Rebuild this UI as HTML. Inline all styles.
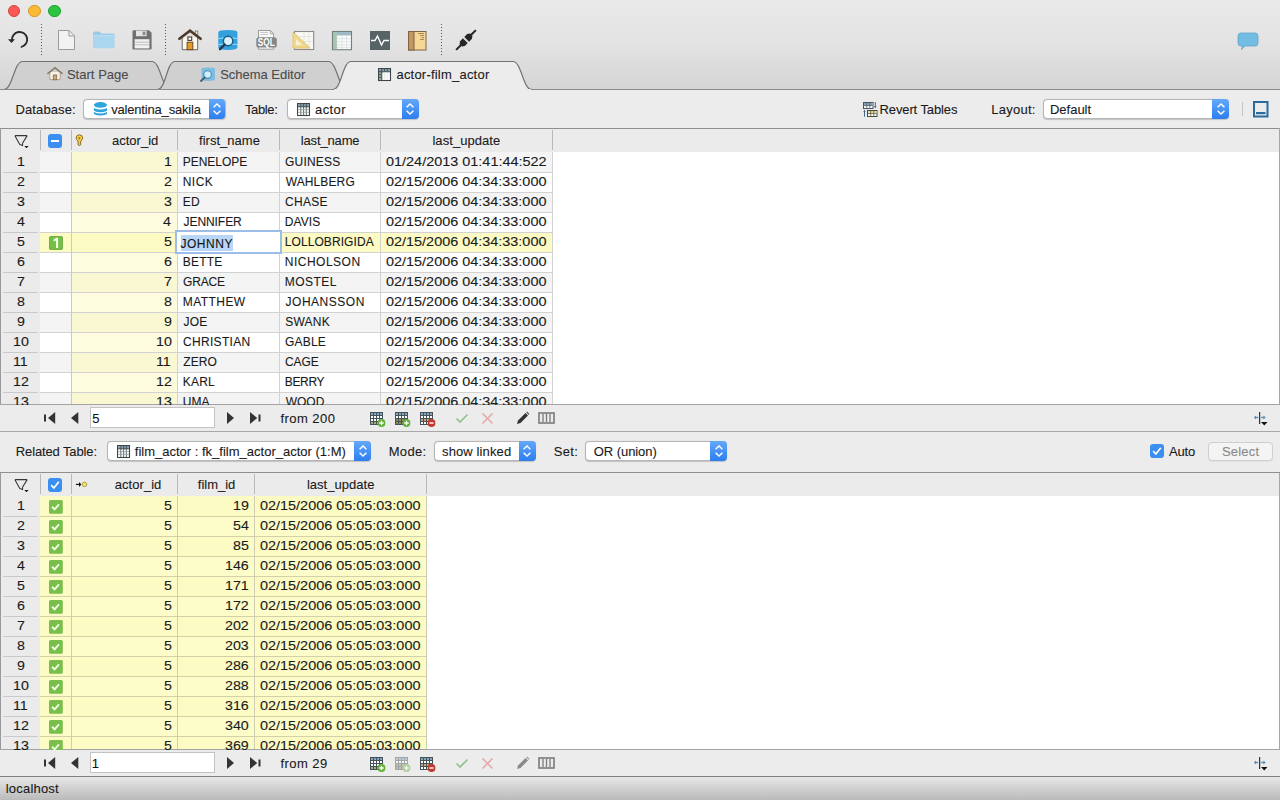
<!DOCTYPE html><html><head><meta charset="utf-8"><style>
html,body{margin:0;padding:0;width:1280px;height:800px;overflow:hidden;background:#ececec}
body{position:relative;font-family:"Liberation Sans",sans-serif}
div,span,svg{position:absolute}
span{white-space:pre;line-height:16px;-webkit-text-stroke:0.1px currentColor}
</style></head><body>
<div style="left:0px;top:0px;width:1280px;height:89px;background:linear-gradient(#e9e9e9 0px,#e4e4e4 40px,#d5d5d5 89px)"></div>
<div style="left:7.9px;top:4.5px;width:10.6px;height:10.6px;border-radius:50%;background:#f95a55;border:0.7px solid #d8413b"></div>
<div style="left:28.1px;top:4.5px;width:10.6px;height:10.6px;border-radius:50%;background:#fbb935;border:0.7px solid #d99a26"></div>
<div style="left:48px;top:4.5px;width:10.6px;height:10.6px;border-radius:50%;background:#2cc440;border:0.7px solid #1ea22f"></div>
<div style="left:41px;top:24px;width:1px;height:32px;background:repeating-linear-gradient(#555 0 1px,transparent 1px 3px)"></div>
<div style="left:165px;top:24px;width:1px;height:32px;background:repeating-linear-gradient(#555 0 1px,transparent 1px 3px)"></div>
<div style="left:441px;top:24px;width:1px;height:32px;background:repeating-linear-gradient(#555 0 1px,transparent 1px 3px)"></div>
<svg style="left:6px;top:28px" width="24" height="24" viewBox="0 0 24 24"><path d="M6 12.2 A7.6 7.6 0 1 1 15.6 18.9" fill="none" stroke="#2b2b2b" stroke-width="1.9" stroke-linecap="round"/><path d="M2 11.2 L9 11.2 L5.5 15 Z" fill="#2b2b2b"/></svg>
<svg style="left:57px;top:29px" width="20" height="22" viewBox="0 0 20 22"><path d="M1.5 1.5 H12 L17.5 7 V20.5 H1.5 Z" fill="#f2f2f2" stroke="#9a9a9a"/><path d="M12 1.5 V7 H17.5" fill="none" stroke="#9a9a9a"/></svg>
<svg style="left:91px;top:29px" width="26" height="22" viewBox="0 0 26 22"><path d="M2 4.6 Q2 2.6 4 2.6 H8.5 L10.3 4.4 H21.6 Q23.6 4.4 23.6 6.4 V8 H2 Z" fill="#9ccbea"/><rect x="2" y="6" width="21.6" height="13.3" rx="1.6" fill="#abd6f0"/><path d="M3 6.8 H22.6" stroke="#c4e4f7" stroke-width="0.8"/></svg>
<svg style="left:131px;top:29px" width="23" height="22" viewBox="0 0 23 22"><path d="M1.5 2.5 Q1.5 1.2 2.8 1.2 H18 L20.6 3.8 V19.2 Q20.6 20.5 19.3 20.5 H2.8 Q1.5 20.5 1.5 19.2 Z" fill="#707070"/><rect x="5" y="1.6" width="10.6" height="5.6" fill="#e4e4e4"/><rect x="11.6" y="2.6" width="2.8" height="3.6" fill="#8a8a8a"/><rect x="3.6" y="10.2" width="14.8" height="9.2" fill="#f2f2f2"/><path d="M4 13.2H18M4 15.8H18" stroke="#b0b0b0" stroke-width="0.8"/></svg>
<svg style="left:178px;top:28px" width="24" height="24" viewBox="0 0 24 24"><rect x="17.2" y="3" width="2.6" height="4" fill="#f4f0e6" stroke="#7a6a5a" stroke-width="0.8"/><path d="M4.2 9.5 V21.7 H19.7 V9.5" fill="#fbf8f0" stroke="#6e665c" stroke-width="1"/><path d="M1.4 10.8 L12 2.6 L22.6 10.8" fill="none" stroke="#4d3b2a" stroke-width="2.6" stroke-linecap="round"/><rect x="9.9" y="9" width="3.8" height="3.4" fill="#fff" stroke="#4d3b2a" stroke-width="1.1"/><rect x="9.1" y="14.2" width="5.7" height="7.5" fill="#e69a2a" stroke="#6a4a20" stroke-width="1"/></svg>
<svg style="left:217px;top:28px" width="23" height="24" viewBox="0 0 23 24"><path d="M1.3 4.5 Q1.3 2.1 10.85 2.1 Q20.4 2.1 20.4 4.5 V19.6 Q20.4 22 10.85 22 Q1.3 22 1.3 19.6 Z" fill="#33a2dc"/><path d="M1.3 10.8 Q5 9.2 8 10.6 M14 10.6 Q17 9.2 20.4 10.8 M1.3 16.8 Q4 15.6 6.5 16.6 M15.5 16.6 Q18 15.6 20.4 16.8" stroke="#9fdcf6" stroke-width="1" fill="none"/><circle cx="11.1" cy="13" r="4.7" fill="#d9f2fc" stroke="#1d5a80" stroke-width="1.4"/><path d="M7.6 16.6 L3 21.2" stroke="#1d3a50" stroke-width="2.4" stroke-linecap="round"/></svg>
<svg style="left:254px;top:28px" width="24" height="24" viewBox="0 0 24 24"><path d="M4.5 2.5 H16.3 L19.6 5.8 V21.2 H4.5 Z" fill="#f7f7f7" stroke="#9b9b9b" stroke-width="1"/><path d="M16.3 2.5 V5.8 H19.6" fill="none" stroke="#9b9b9b" stroke-width="0.8"/><path d="M6.5 4.5 H14 M6.5 6.5 H14" stroke="#c9c9c9" stroke-width="1"/><rect x="2.3" y="9.2" width="20.5" height="10.4" rx="2.6" fill="#868686"/><text x="3.8" y="18.3" font-family="Liberation Sans" font-size="10.8" font-weight="bold" fill="#fff" textLength="17" lengthAdjust="spacingAndGlyphs">SQL</text></svg>
<svg style="left:291px;top:30px" width="24" height="21" viewBox="0 0 24 21"><rect x="3.5" y="1.5" width="19.2" height="18" fill="#f8f8f4" stroke="#8a8a8a" stroke-width="1.1"/><path d="M8 6.5H22M8 11.5H22M13 2V19M18 2V19" stroke="#e2e2da" stroke-width="0.8"/><path d="M2 2 L2 18 L19 18 Z" fill="#f0d88e" stroke="#e3c470" stroke-width="1"/><path d="M5 9 L5 15 L11 15 Z" fill="#f8f1d8"/></svg>
<svg style="left:331px;top:30px" width="23" height="21" viewBox="0 0 23 21"><rect x="1.5" y="1.5" width="19" height="18.2" fill="#fbfbfb" stroke="#737f7f" stroke-width="1.1"/><rect x="2" y="2" width="18" height="3.4" fill="#9dbac8"/><rect x="2" y="2" width="3.8" height="17.2" fill="#a7c6ae"/><path d="M6 5.5V19M11 2V19M15.6 2V19M2 8.6H20M2 11.7H20M2 14.8H20M2 17.3H20" stroke="#a9b9b9" stroke-width="0.5" opacity="0.6"/></svg>
<svg style="left:369px;top:30px" width="22" height="21" viewBox="0 0 22 21"><rect x="1" y="1" width="20" height="19" fill="#586366"/><path d="M2 10.5 H6 L8.5 6 L12.5 15 L15 10.5 H20" fill="none" stroke="#fff" stroke-width="1.4" stroke-linejoin="miter"/></svg>
<svg style="left:407px;top:30px" width="21" height="21" viewBox="0 0 21 21"><rect x="1.5" y="1.5" width="17.5" height="18.5" fill="#f7d796" stroke="#7d6442" stroke-width="1"/><rect x="1.5" y="1.5" width="5.5" height="18.5" fill="#c4955e" stroke="#7d6442" stroke-width="1"/><path d="M11 3.5H17M13 5.5H17M14.5 7.5H17M13 9.5H17" stroke="#6a5030" stroke-width="0.6"/></svg>
<svg style="left:453px;top:27px" width="26" height="26" viewBox="0 0 26 26"><g transform="rotate(-45 13 13)"><path d="M-1 13 H6 M20 13 H27" stroke="#262626" stroke-width="2"/><path d="M5.5 11.4 L8 9.6 H12 V16.4 H8 L5.5 14.6 Z" fill="#262626"/><path d="M20.5 11.4 L18 9.6 H14 V16.4 H18 L20.5 14.6 Z" fill="#262626"/></g></svg>
<svg style="left:1236px;top:31px" width="24" height="20" viewBox="0 0 24 20"><path d="M5 2 H19 Q22 2 22 5 V12 Q22 15 19 15 H9 L5.5 18.5 L6.5 15 H5 Q2 15 2 12 V5 Q2 2 5 2 Z" fill="#73bde3" stroke="#5fa4ca" stroke-width="0.8"/></svg>
<svg style="left:0;top:55px" width="1280" height="35" viewBox="0 55 1280 35"><path d="M4 89.5 C12.5 89.5 14.0 61.5 22.5 61.5 L152 61.5 C160.5 61.5 162.0 89.5 170.5 89.5 Z" fill="#d0d0d0" stroke="#727272" stroke-width="1.15"/><path d="M157.5 89.5 C166.0 89.5 166.5 61.5 175 61.5 L328.5 61.5 C337.0 61.5 338.5 89.5 347 89.5 Z" fill="#d0d0d0" stroke="#727272" stroke-width="1.15"/><rect x="0" y="89" width="1280" height="1" fill="#8a8a8a"/><path d="M333 89.5 C341.5 89.5 342.5 61.5 351 61.5 L513 61.5 C521.5 61.5 523.0 89.5 531.5 89.5 Z" fill="#ececec" stroke="#727272" stroke-width="1.15"/><rect x="334" y="89" width="197" height="2" fill="#ececec"/></svg>
<svg style="left:46px;top:66px" width="18" height="16" viewBox="0 0 18 16"><path d="M3.8 6 V13.6 H14.2 V6" fill="#f7f0e6" stroke="#a89c8c" stroke-width="0.9"/><path d="M2 7.4 L9 1.8 L16 7.4" fill="none" stroke="#8a7d6c" stroke-width="1.7" stroke-linecap="round"/><rect x="7.3" y="9" width="3.4" height="4.8" fill="#c9a97a" stroke="#8a6a40" stroke-width="0.8"/></svg>
<span style="left:66.91px;top:67px;font-size:13px;letter-spacing:0.027px;color:#4a4a4a;">Start Page</span>
<svg style="left:199px;top:66px" width="18" height="16" viewBox="0 0 18 16"><path d="M2.5 2.8 Q2.5 1.4 9.2 1.4 Q16 1.4 16 2.8 V13.6 Q16 15 9.2 15 Q2.5 15 2.5 13.6 Z" fill="#7cbde0"/><circle cx="8.6" cy="8.6" r="3.8" fill="#cdeefb" stroke="#4a8db3" stroke-width="1.1"/><path d="M5.8 11.4 L2 15" stroke="#4a5a66" stroke-width="1.8" stroke-linecap="round"/></svg>
<span style="left:220.21px;top:67px;font-size:13px;letter-spacing:-0.021px;color:#4a4a4a;">Schema Editor</span>
<svg style="left:378px;top:68px" width="14" height="14" viewBox="0 0 14 14"><rect x="0.5" y="0.5" width="12" height="12" fill="#fff" stroke="#3c474b" stroke-width="1.1"/><rect x="1" y="1" width="2.6" height="11" fill="#8fae9e"/><rect x="1" y="1" width="11" height="2.6" fill="#86a0ab"/><path d="M1 3.8H12" stroke="#3c474b" stroke-width="1"/><path d="M3.8 1V12" stroke="#3c474b" stroke-width="1"/><path d="M6.6 1V3.6M9.3 1V3.6M1 6.6H3.6M1 9.3H3.6" stroke="#3c474b" stroke-width="0.8"/><path d="M6.6 4V12M9.3 4V12M4 6.6H12M4 9.3H12" stroke="#dfe6e6" stroke-width="0.6"/></svg>
<span style="left:396.45px;top:67px;font-size:13px;letter-spacing:0.213px;color:#1a1a1a;">actor-film_actor</span>
<div style="left:0px;top:90px;width:1280px;height:38px;background:#ececec"></div>
<div style="left:0px;top:128px;width:1280px;height:1px;background:#8f8f8f"></div>
<span style="left:15.43px;top:102px;font-size:13px;letter-spacing:0.124px;color:#1a1a1a;">Database:</span>
<div style="left:82.5px;top:99.2px;width:143.0px;height:20.299999999999997px;box-sizing:border-box;border-radius:4px;background:#fff;border:0.5px solid #b5b5b5;box-shadow:0 0.5px 1px rgba(0,0,0,0.18)"></div>
<div style="left:208.8px;top:99.2px;width:16.69999999999999px;height:20.299999999999997px;border-radius:0 4px 4px 0;background:linear-gradient(#64a8f8,#2c7ef0)"></div>
<svg style="left:212.15px;top:102.35px" width="10" height="14" viewBox="0 0 10 14"><path d="M1.6 5.2 L5 2 L8.4 5.2 M1.6 8.8 L5 12 L8.4 8.8" fill="none" stroke="#fff" stroke-width="1.5"/></svg>
<svg style="left:92px;top:101px" width="17" height="16" viewBox="0 0 17 16"><g fill="#2ea4dc"><ellipse cx="8.45" cy="3.9" rx="6.55" ry="2.8"/><path d="M1.9 6.9 Q8.45 9.9 15 6.9 V9.7 Q8.45 12.7 1.9 9.7 Z"/><path d="M1.9 10.9 Q8.45 13.9 15 10.9 V13 Q8.45 16.2 1.9 13 Z"/></g></svg>
<span style="left:111.16px;top:102px;font-size:13px;letter-spacing:-0.177px;color:#1a1a1a;">valentina_sakila</span>
<span style="left:245.01px;top:102px;font-size:13px;letter-spacing:-0.390px;color:#1a1a1a;">Table:</span>
<div style="left:286.5px;top:99.2px;width:132.25px;height:20.299999999999997px;box-sizing:border-box;border-radius:4px;background:#fff;border:0.5px solid #b5b5b5;box-shadow:0 0.5px 1px rgba(0,0,0,0.18)"></div>
<div style="left:401.9px;top:99.2px;width:16.850000000000023px;height:20.299999999999997px;border-radius:0 4px 4px 0;background:linear-gradient(#64a8f8,#2c7ef0)"></div>
<svg style="left:405.325px;top:102.35px" width="10" height="14" viewBox="0 0 10 14"><path d="M1.6 5.2 L5 2 L8.4 5.2 M1.6 8.8 L5 12 L8.4 8.8" fill="none" stroke="#fff" stroke-width="1.5"/></svg>
<svg style="left:296.8px;top:102.8px" width="14" height="14" viewBox="0 0 14 14"><rect x="0.5" y="0.5" width="12" height="12" fill="#fff" stroke="#3c474b" stroke-width="1.1"/><rect x="1" y="1" width="11" height="2.6" fill="#86a0ab"/><path d="M1 3.8H12" stroke="#3c474b" stroke-width="1"/><path d="M3.8 1V12M6.6 1V12M9.3 1V12" stroke="#3c474b" stroke-width="0.8"/><path d="M1 6.6H12M1 9.3H12" stroke="#8d9598" stroke-width="0.7"/></svg>
<span style="left:315.05px;top:102px;font-size:13px;letter-spacing:0.392px;color:#1a1a1a;">actor</span>
<svg style="left:861px;top:100px" width="18" height="19" viewBox="0 0 18 19"><rect x="2.5" y="2.5" width="9.5" height="6" fill="#fff" stroke="#4a5560"/><rect x="3" y="3" width="8.5" height="2.6" fill="#8aa5b5"/><path d="M5.7 3V8M8.8 3V8M3 5.6H11.5" stroke="#4a5560" stroke-width="0.7"/><path d="M14.3 2V7.5" stroke="#3f6a8a" stroke-width="1"/><path d="M13 6.2 L14.3 8.2 L15.6 6.2Z" fill="#3f6a8a"/><rect x="6.5" y="10.5" width="9.5" height="6" fill="#fff" stroke="#4b4b35"/><rect x="7" y="11" width="8.5" height="2.6" fill="#e3dba0"/><path d="M9.7 11V16M12.8 11V16M7 13.6H15.5" stroke="#4b4b35" stroke-width="0.7"/><path d="M3.5 11V16.7" stroke="#3f6a8a" stroke-width="1"/><path d="M2.2 11.8 L3.5 9.8 L4.8 11.8Z" fill="#3f6a8a"/></svg>
<span style="left:879.53px;top:102px;font-size:13px;letter-spacing:-0.115px;color:#1a1a1a;">Revert Tables</span>
<span style="left:991.23px;top:102px;font-size:13px;letter-spacing:0.252px;color:#1a1a1a;">Layout:</span>
<div style="left:1042.8px;top:99.2px;width:186.20000000000005px;height:20.299999999999997px;box-sizing:border-box;border-radius:4px;background:#fff;border:0.5px solid #b5b5b5;box-shadow:0 0.5px 1px rgba(0,0,0,0.18)"></div>
<div style="left:1212px;top:99.2px;width:17px;height:20.299999999999997px;border-radius:0 4px 4px 0;background:linear-gradient(#64a8f8,#2c7ef0)"></div>
<svg style="left:1215.5px;top:102.35px" width="10" height="14" viewBox="0 0 10 14"><path d="M1.6 5.2 L5 2 L8.4 5.2 M1.6 8.8 L5 12 L8.4 8.8" fill="none" stroke="#fff" stroke-width="1.5"/></svg>
<span style="left:1049.93px;top:102px;font-size:13px;letter-spacing:0.000px;color:#1a1a1a;">Default</span>
<div style="left:1242px;top:102px;width:1px;height:14px;background:#c4c4c4"></div>
<svg style="left:1252px;top:100px" width="17" height="18" viewBox="0 0 17 18"><rect x="2" y="2" width="13.5" height="14.5" fill="none" stroke="#2a6a9c" stroke-width="2"/><rect x="4" y="12" width="9.5" height="2.2" fill="#2a6a9c"/></svg>
<div style="left:0px;top:129px;width:1280px;height:275px;background:#fff"></div>
<div style="left:0px;top:129px;width:1280px;height:23px;background:#ebebeb"></div>
<div style="left:0px;top:152px;width:40px;height:20px;background:#ebebeb"></div>
<div style="left:40px;top:152px;width:31px;height:20px;background:#f4f4f4"></div>
<div style="left:71px;top:152px;width:106px;height:20px;background:#f9f8d3"></div>
<div style="left:177px;top:152px;width:102px;height:20px;background:#f4f4f4"></div>
<div style="left:279px;top:152px;width:101px;height:20px;background:#f4f4f4"></div>
<div style="left:380px;top:152px;width:172px;height:20px;background:#f4f4f4"></div>
<div style="left:0px;top:172px;width:40px;height:20px;background:#ebebeb"></div>
<div style="left:40px;top:172px;width:31px;height:20px;background:#ffffff"></div>
<div style="left:71px;top:172px;width:106px;height:20px;background:#fdfcde"></div>
<div style="left:177px;top:172px;width:102px;height:20px;background:#ffffff"></div>
<div style="left:279px;top:172px;width:101px;height:20px;background:#ffffff"></div>
<div style="left:380px;top:172px;width:172px;height:20px;background:#ffffff"></div>
<div style="left:0px;top:192px;width:40px;height:20px;background:#ebebeb"></div>
<div style="left:40px;top:192px;width:31px;height:20px;background:#f4f4f4"></div>
<div style="left:71px;top:192px;width:106px;height:20px;background:#f9f8d3"></div>
<div style="left:177px;top:192px;width:102px;height:20px;background:#f4f4f4"></div>
<div style="left:279px;top:192px;width:101px;height:20px;background:#f4f4f4"></div>
<div style="left:380px;top:192px;width:172px;height:20px;background:#f4f4f4"></div>
<div style="left:0px;top:212px;width:40px;height:20px;background:#ebebeb"></div>
<div style="left:40px;top:212px;width:31px;height:20px;background:#ffffff"></div>
<div style="left:71px;top:212px;width:106px;height:20px;background:#fdfcde"></div>
<div style="left:177px;top:212px;width:102px;height:20px;background:#ffffff"></div>
<div style="left:279px;top:212px;width:101px;height:20px;background:#ffffff"></div>
<div style="left:380px;top:212px;width:172px;height:20px;background:#ffffff"></div>
<div style="left:0px;top:232px;width:40px;height:20px;background:#ebebeb"></div>
<div style="left:40px;top:232px;width:31px;height:20px;background:#fcfbc3"></div>
<div style="left:71px;top:232px;width:106px;height:20px;background:#fcfbc3"></div>
<div style="left:177px;top:232px;width:102px;height:20px;background:#fcfbc3"></div>
<div style="left:279px;top:232px;width:101px;height:20px;background:#fcfbc3"></div>
<div style="left:380px;top:232px;width:172px;height:20px;background:#fcfbc3"></div>
<div style="left:0px;top:252px;width:40px;height:20px;background:#ebebeb"></div>
<div style="left:40px;top:252px;width:31px;height:20px;background:#ffffff"></div>
<div style="left:71px;top:252px;width:106px;height:20px;background:#fdfcde"></div>
<div style="left:177px;top:252px;width:102px;height:20px;background:#ffffff"></div>
<div style="left:279px;top:252px;width:101px;height:20px;background:#ffffff"></div>
<div style="left:380px;top:252px;width:172px;height:20px;background:#ffffff"></div>
<div style="left:0px;top:272px;width:40px;height:20px;background:#ebebeb"></div>
<div style="left:40px;top:272px;width:31px;height:20px;background:#f4f4f4"></div>
<div style="left:71px;top:272px;width:106px;height:20px;background:#f9f8d3"></div>
<div style="left:177px;top:272px;width:102px;height:20px;background:#f4f4f4"></div>
<div style="left:279px;top:272px;width:101px;height:20px;background:#f4f4f4"></div>
<div style="left:380px;top:272px;width:172px;height:20px;background:#f4f4f4"></div>
<div style="left:0px;top:292px;width:40px;height:20px;background:#ebebeb"></div>
<div style="left:40px;top:292px;width:31px;height:20px;background:#ffffff"></div>
<div style="left:71px;top:292px;width:106px;height:20px;background:#fdfcde"></div>
<div style="left:177px;top:292px;width:102px;height:20px;background:#ffffff"></div>
<div style="left:279px;top:292px;width:101px;height:20px;background:#ffffff"></div>
<div style="left:380px;top:292px;width:172px;height:20px;background:#ffffff"></div>
<div style="left:0px;top:312px;width:40px;height:20px;background:#ebebeb"></div>
<div style="left:40px;top:312px;width:31px;height:20px;background:#f4f4f4"></div>
<div style="left:71px;top:312px;width:106px;height:20px;background:#f9f8d3"></div>
<div style="left:177px;top:312px;width:102px;height:20px;background:#f4f4f4"></div>
<div style="left:279px;top:312px;width:101px;height:20px;background:#f4f4f4"></div>
<div style="left:380px;top:312px;width:172px;height:20px;background:#f4f4f4"></div>
<div style="left:0px;top:332px;width:40px;height:20px;background:#ebebeb"></div>
<div style="left:40px;top:332px;width:31px;height:20px;background:#ffffff"></div>
<div style="left:71px;top:332px;width:106px;height:20px;background:#fdfcde"></div>
<div style="left:177px;top:332px;width:102px;height:20px;background:#ffffff"></div>
<div style="left:279px;top:332px;width:101px;height:20px;background:#ffffff"></div>
<div style="left:380px;top:332px;width:172px;height:20px;background:#ffffff"></div>
<div style="left:0px;top:352px;width:40px;height:20px;background:#ebebeb"></div>
<div style="left:40px;top:352px;width:31px;height:20px;background:#f4f4f4"></div>
<div style="left:71px;top:352px;width:106px;height:20px;background:#f9f8d3"></div>
<div style="left:177px;top:352px;width:102px;height:20px;background:#f4f4f4"></div>
<div style="left:279px;top:352px;width:101px;height:20px;background:#f4f4f4"></div>
<div style="left:380px;top:352px;width:172px;height:20px;background:#f4f4f4"></div>
<div style="left:0px;top:372px;width:40px;height:20px;background:#ebebeb"></div>
<div style="left:40px;top:372px;width:31px;height:20px;background:#ffffff"></div>
<div style="left:71px;top:372px;width:106px;height:20px;background:#fdfcde"></div>
<div style="left:177px;top:372px;width:102px;height:20px;background:#ffffff"></div>
<div style="left:279px;top:372px;width:101px;height:20px;background:#ffffff"></div>
<div style="left:380px;top:372px;width:172px;height:20px;background:#ffffff"></div>
<div style="left:0px;top:392px;width:40px;height:12px;background:#ebebeb"></div>
<div style="left:40px;top:392px;width:31px;height:12px;background:#f4f4f4"></div>
<div style="left:71px;top:392px;width:106px;height:12px;background:#f9f8d3"></div>
<div style="left:177px;top:392px;width:102px;height:12px;background:#f4f4f4"></div>
<div style="left:279px;top:392px;width:101px;height:12px;background:#f4f4f4"></div>
<div style="left:380px;top:392px;width:172px;height:12px;background:#f4f4f4"></div>
<div style="left:3px;top:172px;width:35px;height:1px;background:#c9c9c9"></div>
<div style="left:40px;top:172px;width:31px;height:1px;background:#d2d2d2"></div>
<div style="left:71px;top:172px;width:481px;height:1px;background:#d2d2d2"></div>
<div style="left:3px;top:192px;width:35px;height:1px;background:#c9c9c9"></div>
<div style="left:40px;top:192px;width:31px;height:1px;background:#d2d2d2"></div>
<div style="left:71px;top:192px;width:481px;height:1px;background:#d2d2d2"></div>
<div style="left:3px;top:212px;width:35px;height:1px;background:#c9c9c9"></div>
<div style="left:40px;top:212px;width:31px;height:1px;background:#d2d2d2"></div>
<div style="left:71px;top:212px;width:481px;height:1px;background:#d2d2d2"></div>
<div style="left:3px;top:232px;width:35px;height:1px;background:#c9c9c9"></div>
<div style="left:40px;top:232px;width:31px;height:1px;background:#d2d2d2"></div>
<div style="left:71px;top:232px;width:481px;height:1px;background:#d2d2d2"></div>
<div style="left:3px;top:252px;width:35px;height:1px;background:#c9c9c9"></div>
<div style="left:40px;top:252px;width:31px;height:1px;background:#d2d2d2"></div>
<div style="left:71px;top:252px;width:481px;height:1px;background:#d2d2d2"></div>
<div style="left:3px;top:272px;width:35px;height:1px;background:#c9c9c9"></div>
<div style="left:40px;top:272px;width:31px;height:1px;background:#d2d2d2"></div>
<div style="left:71px;top:272px;width:481px;height:1px;background:#d2d2d2"></div>
<div style="left:3px;top:292px;width:35px;height:1px;background:#c9c9c9"></div>
<div style="left:40px;top:292px;width:31px;height:1px;background:#d2d2d2"></div>
<div style="left:71px;top:292px;width:481px;height:1px;background:#d2d2d2"></div>
<div style="left:3px;top:312px;width:35px;height:1px;background:#c9c9c9"></div>
<div style="left:40px;top:312px;width:31px;height:1px;background:#d2d2d2"></div>
<div style="left:71px;top:312px;width:481px;height:1px;background:#d2d2d2"></div>
<div style="left:3px;top:332px;width:35px;height:1px;background:#c9c9c9"></div>
<div style="left:40px;top:332px;width:31px;height:1px;background:#d2d2d2"></div>
<div style="left:71px;top:332px;width:481px;height:1px;background:#d2d2d2"></div>
<div style="left:3px;top:352px;width:35px;height:1px;background:#c9c9c9"></div>
<div style="left:40px;top:352px;width:31px;height:1px;background:#d2d2d2"></div>
<div style="left:71px;top:352px;width:481px;height:1px;background:#d2d2d2"></div>
<div style="left:3px;top:372px;width:35px;height:1px;background:#c9c9c9"></div>
<div style="left:40px;top:372px;width:31px;height:1px;background:#d2d2d2"></div>
<div style="left:71px;top:372px;width:481px;height:1px;background:#d2d2d2"></div>
<div style="left:3px;top:392px;width:35px;height:1px;background:#c9c9c9"></div>
<div style="left:40px;top:392px;width:31px;height:1px;background:#d2d2d2"></div>
<div style="left:71px;top:392px;width:481px;height:1px;background:#d2d2d2"></div>
<div style="left:40px;top:130px;width:1px;height:20px;background:#b9b9b9"></div>
<div style="left:71px;top:130px;width:1px;height:20px;background:#b9b9b9"></div>
<div style="left:71px;top:152px;width:1px;height:252px;background:#cdccb8"></div>
<div style="left:177px;top:130px;width:1px;height:20px;background:#b9b9b9"></div>
<div style="left:177px;top:152px;width:1px;height:252px;background:#d2d2d2"></div>
<div style="left:279px;top:130px;width:1px;height:20px;background:#b9b9b9"></div>
<div style="left:279px;top:152px;width:1px;height:252px;background:#d2d2d2"></div>
<div style="left:380px;top:130px;width:1px;height:20px;background:#b9b9b9"></div>
<div style="left:380px;top:152px;width:1px;height:252px;background:#d2d2d2"></div>
<div style="left:552px;top:130px;width:1px;height:20px;background:#b9b9b9"></div>
<div style="left:552px;top:152px;width:1px;height:252px;background:#d2d2d2"></div>
<div style="left:0px;top:128px;width:1px;height:276px;background:#9a9a9a"></div>
<div style="left:1279px;top:128px;width:1px;height:276px;background:#a6a6a6"></div>
<div style="left:0px;top:404px;width:1280px;height:1px;background:#a3a3a3"></div>
<svg style="left:14px;top:134px" width="16" height="16" viewBox="0 0 16 16"><path d="M1.6 1.6 H12.5 Q13.2 1.7 12.8 2.4 L8.6 9 V11.6 L5.8 10.4 L1.3 2.4 Q0.9 1.7 1.6 1.6 Z" fill="none" stroke="#353535" stroke-width="1.05" stroke-linejoin="round"/><path d="M10.3 12.1 H14.6 L12.45 14.3 Z" fill="#1a1a1a"/></svg>
<svg style="left:47px;top:133px" width="16" height="16" viewBox="0 0 16 16"><rect x="1" y="1" width="14" height="14" rx="3" fill="#3b8ff0"/><rect x="4" y="7" width="8" height="2" fill="#fff"/></svg>
<svg style="left:74px;top:133px" width="11" height="15" viewBox="0 0 11 15"><path d="M4.1 8 Q2.1 6.8 2.1 5.1 A3.3 3.3 0 0 1 8.7 5.1 Q8.7 6.8 6.7 8 V11.8 Q5.4 13.2 4.1 11.8 Z" fill="#f6cb4c" stroke="#7d6418" stroke-width="0.9"/><circle cx="5.4" cy="5.2" r="1" fill="#9a6a00"/></svg>
<span style="left:111.95px;top:133px;font-size:13px;letter-spacing:0.020px;color:#1a1a1a;">actor_id</span>
<span style="left:199.02px;top:133px;font-size:13px;letter-spacing:0.019px;color:#1a1a1a;">first_name</span>
<span style="left:300.72px;top:133px;font-size:13px;letter-spacing:-0.141px;color:#1a1a1a;">last_name</span>
<span style="left:432.42px;top:133px;font-size:13px;letter-spacing:0.063px;color:#1a1a1a;">last_update</span>
<span style="left:16.74px;top:154px;font-size:12.5px;transform:scaleX(1.1400);transform-origin:0 0;color:#1a1a1a;">1</span>
<span style="left:163.77px;top:154px;font-size:12.5px;transform:scaleX(1.1400);transform-origin:0 0;color:#1a1a1a;">1</span>
<span style="left:182.72px;top:154px;font-size:12px;letter-spacing:-0.013px;color:#1a1a1a;">PENELOPE</span>
<span style="left:285.10px;top:154px;font-size:12px;letter-spacing:0.174px;color:#1a1a1a;">GUINESS</span>
<span style="left:386.19px;top:154px;font-size:12.5px;transform:scaleX(1.1552);transform-origin:0 0;color:#1a1a1a;">01/24/2013 01:41:44:522</span>
<span style="left:16.94px;top:174px;font-size:12.5px;transform:scaleX(1.1400);transform-origin:0 0;color:#1a1a1a;">2</span>
<span style="left:163.79px;top:174px;font-size:12.5px;transform:scaleX(1.1400);transform-origin:0 0;color:#1a1a1a;">2</span>
<span style="left:182.72px;top:174px;font-size:12px;letter-spacing:0.483px;color:#1a1a1a;">NICK</span>
<span style="left:285.65px;top:174px;font-size:12px;letter-spacing:0.124px;color:#1a1a1a;">WAHLBERG</span>
<span style="left:386.19px;top:174px;font-size:12.5px;transform:scaleX(1.1540);transform-origin:0 0;color:#1a1a1a;">02/15/2006 04:34:33:000</span>
<span style="left:16.98px;top:194px;font-size:12.5px;transform:scaleX(1.1400);transform-origin:0 0;color:#1a1a1a;">3</span>
<span style="left:163.70px;top:194px;font-size:12.5px;transform:scaleX(1.1400);transform-origin:0 0;color:#1a1a1a;">3</span>
<span style="left:182.72px;top:194px;font-size:12px;letter-spacing:0.389px;color:#1a1a1a;">ED</span>
<span style="left:285.09px;top:194px;font-size:12px;letter-spacing:0.245px;color:#1a1a1a;">CHASE</span>
<span style="left:386.19px;top:194px;font-size:12.5px;transform:scaleX(1.1540);transform-origin:0 0;color:#1a1a1a;">02/15/2006 04:34:33:000</span>
<span style="left:16.98px;top:214px;font-size:12.5px;transform:scaleX(1.1400);transform-origin:0 0;color:#1a1a1a;">4</span>
<span style="left:163.49px;top:214px;font-size:12.5px;transform:scaleX(1.1400);transform-origin:0 0;color:#1a1a1a;">4</span>
<span style="left:183.51px;top:214px;font-size:12px;letter-spacing:-0.061px;color:#1a1a1a;">JENNIFER</span>
<span style="left:284.72px;top:214px;font-size:12px;letter-spacing:0.081px;color:#1a1a1a;">DAVIS</span>
<span style="left:386.19px;top:214px;font-size:12.5px;transform:scaleX(1.1540);transform-origin:0 0;color:#1a1a1a;">02/15/2006 04:34:33:000</span>
<span style="left:16.95px;top:234px;font-size:12.5px;transform:scaleX(1.1400);transform-origin:0 0;color:#1a1a1a;">5</span>
<span style="left:163.67px;top:234px;font-size:12.5px;transform:scaleX(1.1400);transform-origin:0 0;color:#1a1a1a;">5</span>
<div style="left:175px;top:230px;width:107px;height:24px;box-sizing:border-box;border:2.5px solid #9bbde8;background:#fff"></div>
<div style="left:180.5px;top:235px;width:52.5px;height:15.5px;background:#b9d6f8"></div>
<span style="left:180.41px;top:236px;font-size:12px;letter-spacing:0.543px;color:#111;">JOHNNY</span>
<svg style="left:49px;top:236px" width="14" height="14" viewBox="0 0 14 14"><rect x="0.4" y="0.4" width="13.2" height="13.2" rx="1.5" fill="#76bf47" stroke="#5c9a36" stroke-width="0.8"/><path d="M4.6 3.6 L7.4 1.7 H9.1 V12 H7.1 V4.4 L4.6 5.6Z" fill="#f4fde8"/></svg>
<span style="left:284.72px;top:234px;font-size:12px;letter-spacing:0.089px;color:#1a1a1a;">LOLLOBRIGIDA</span>
<span style="left:386.19px;top:234px;font-size:12.5px;transform:scaleX(1.1540);transform-origin:0 0;color:#1a1a1a;">02/15/2006 04:34:33:000</span>
<span style="left:16.89px;top:254px;font-size:12.5px;transform:scaleX(1.1400);transform-origin:0 0;color:#1a1a1a;">6</span>
<span style="left:163.70px;top:254px;font-size:12.5px;transform:scaleX(1.1400);transform-origin:0 0;color:#1a1a1a;">6</span>
<span style="left:182.72px;top:254px;font-size:12px;letter-spacing:0.207px;color:#1a1a1a;">BETTE</span>
<span style="left:284.72px;top:254px;font-size:12px;letter-spacing:0.502px;color:#1a1a1a;">NICHOLSON</span>
<span style="left:386.19px;top:254px;font-size:12.5px;transform:scaleX(1.1540);transform-origin:0 0;color:#1a1a1a;">02/15/2006 04:34:33:000</span>
<span style="left:16.93px;top:274px;font-size:12.5px;transform:scaleX(1.1400);transform-origin:0 0;color:#1a1a1a;">7</span>
<span style="left:163.79px;top:274px;font-size:12.5px;transform:scaleX(1.1400);transform-origin:0 0;color:#1a1a1a;">7</span>
<span style="left:183.10px;top:274px;font-size:12px;letter-spacing:-0.164px;color:#1a1a1a;">GRACE</span>
<span style="left:284.72px;top:274px;font-size:12px;letter-spacing:0.448px;color:#1a1a1a;">MOSTEL</span>
<span style="left:386.19px;top:274px;font-size:12.5px;transform:scaleX(1.1540);transform-origin:0 0;color:#1a1a1a;">02/15/2006 04:34:33:000</span>
<span style="left:16.94px;top:294px;font-size:12.5px;transform:scaleX(1.1400);transform-origin:0 0;color:#1a1a1a;">8</span>
<span style="left:163.69px;top:294px;font-size:12.5px;transform:scaleX(1.1400);transform-origin:0 0;color:#1a1a1a;">8</span>
<span style="left:182.72px;top:294px;font-size:12px;letter-spacing:0.445px;color:#1a1a1a;">MATTHEW</span>
<span style="left:285.51px;top:294px;font-size:12px;letter-spacing:0.524px;color:#1a1a1a;">JOHANSSON</span>
<span style="left:386.19px;top:294px;font-size:12.5px;transform:scaleX(1.1540);transform-origin:0 0;color:#1a1a1a;">02/15/2006 04:34:33:000</span>
<span style="left:16.94px;top:314px;font-size:12.5px;transform:scaleX(1.1400);transform-origin:0 0;color:#1a1a1a;">9</span>
<span style="left:163.75px;top:314px;font-size:12.5px;transform:scaleX(1.1400);transform-origin:0 0;color:#1a1a1a;">9</span>
<span style="left:183.51px;top:314px;font-size:12px;letter-spacing:0.233px;color:#1a1a1a;">JOE</span>
<span style="left:285.16px;top:314px;font-size:12px;letter-spacing:0.269px;color:#1a1a1a;">SWANK</span>
<span style="left:386.19px;top:314px;font-size:12.5px;transform:scaleX(1.1540);transform-origin:0 0;color:#1a1a1a;">02/15/2006 04:34:33:000</span>
<span style="left:12.71px;top:334px;font-size:12.5px;transform:scaleX(1.1400);transform-origin:0 0;color:#1a1a1a;">10</span>
<span style="left:155.71px;top:334px;font-size:12.5px;transform:scaleX(1.1400);transform-origin:0 0;color:#1a1a1a;">10</span>
<span style="left:183.09px;top:334px;font-size:12px;letter-spacing:0.302px;color:#1a1a1a;">CHRISTIAN</span>
<span style="left:285.10px;top:334px;font-size:12px;letter-spacing:0.175px;color:#1a1a1a;">GABLE</span>
<span style="left:386.19px;top:334px;font-size:12.5px;transform:scaleX(1.1540);transform-origin:0 0;color:#1a1a1a;">02/15/2006 04:34:33:000</span>
<span style="left:12.78px;top:354px;font-size:12.5px;transform:scaleX(1.1400);transform-origin:0 0;color:#1a1a1a;">11</span>
<span style="left:155.85px;top:354px;font-size:12.5px;transform:scaleX(1.1400);transform-origin:0 0;color:#1a1a1a;">11</span>
<span style="left:183.32px;top:354px;font-size:12px;letter-spacing:0.074px;color:#1a1a1a;">ZERO</span>
<span style="left:285.09px;top:354px;font-size:12px;letter-spacing:-0.128px;color:#1a1a1a;">CAGE</span>
<span style="left:386.19px;top:354px;font-size:12.5px;transform:scaleX(1.1540);transform-origin:0 0;color:#1a1a1a;">02/15/2006 04:34:33:000</span>
<span style="left:12.79px;top:374px;font-size:12.5px;transform:scaleX(1.1400);transform-origin:0 0;color:#1a1a1a;">12</span>
<span style="left:155.87px;top:374px;font-size:12.5px;transform:scaleX(1.1400);transform-origin:0 0;color:#1a1a1a;">12</span>
<span style="left:182.72px;top:374px;font-size:12px;letter-spacing:0.212px;color:#1a1a1a;">KARL</span>
<span style="left:284.72px;top:374px;font-size:12px;letter-spacing:-0.324px;color:#1a1a1a;">BERRY</span>
<span style="left:386.19px;top:374px;font-size:12.5px;transform:scaleX(1.1540);transform-origin:0 0;color:#1a1a1a;">02/15/2006 04:34:33:000</span>
<span style="left:12.75px;top:394px;font-size:12.5px;transform:scaleX(1.1400);transform-origin:0 0;color:#1a1a1a;">13</span>
<span style="left:155.78px;top:394px;font-size:12.5px;transform:scaleX(1.1400);transform-origin:0 0;color:#1a1a1a;">13</span>
<span style="left:182.77px;top:394px;font-size:12px;letter-spacing:0.000px;color:#1a1a1a;">UMA</span>
<span style="left:285.65px;top:394px;font-size:12px;letter-spacing:0.000px;color:#1a1a1a;">WOOD</span>
<span style="left:386.19px;top:394px;font-size:12.5px;transform:scaleX(1.1540);transform-origin:0 0;color:#1a1a1a;">02/15/2006 04:34:33:000</span>
<div style="left:0px;top:473px;width:1280px;height:276px;background:#fff"></div>
<div style="left:0px;top:473px;width:1280px;height:23px;background:#ebebeb"></div>
<div style="left:0px;top:496px;width:40px;height:20px;background:#ebebeb"></div>
<div style="left:40px;top:496px;width:31px;height:20px;background:#fcfbc3"></div>
<div style="left:71px;top:496px;width:106px;height:20px;background:#fcfbc3"></div>
<div style="left:177px;top:496px;width:77px;height:20px;background:#fcfbc3"></div>
<div style="left:254px;top:496px;width:172px;height:20px;background:#fcfbc3"></div>
<div style="left:0px;top:516px;width:40px;height:20px;background:#ebebeb"></div>
<div style="left:40px;top:516px;width:31px;height:20px;background:#fdfdca"></div>
<div style="left:71px;top:516px;width:106px;height:20px;background:#fdfdca"></div>
<div style="left:177px;top:516px;width:77px;height:20px;background:#fdfdca"></div>
<div style="left:254px;top:516px;width:172px;height:20px;background:#fdfdca"></div>
<div style="left:0px;top:536px;width:40px;height:20px;background:#ebebeb"></div>
<div style="left:40px;top:536px;width:31px;height:20px;background:#fcfbc3"></div>
<div style="left:71px;top:536px;width:106px;height:20px;background:#fcfbc3"></div>
<div style="left:177px;top:536px;width:77px;height:20px;background:#fcfbc3"></div>
<div style="left:254px;top:536px;width:172px;height:20px;background:#fcfbc3"></div>
<div style="left:0px;top:556px;width:40px;height:20px;background:#ebebeb"></div>
<div style="left:40px;top:556px;width:31px;height:20px;background:#fdfdca"></div>
<div style="left:71px;top:556px;width:106px;height:20px;background:#fdfdca"></div>
<div style="left:177px;top:556px;width:77px;height:20px;background:#fdfdca"></div>
<div style="left:254px;top:556px;width:172px;height:20px;background:#fdfdca"></div>
<div style="left:0px;top:576px;width:40px;height:20px;background:#ebebeb"></div>
<div style="left:40px;top:576px;width:31px;height:20px;background:#fcfbc3"></div>
<div style="left:71px;top:576px;width:106px;height:20px;background:#fcfbc3"></div>
<div style="left:177px;top:576px;width:77px;height:20px;background:#fcfbc3"></div>
<div style="left:254px;top:576px;width:172px;height:20px;background:#fcfbc3"></div>
<div style="left:0px;top:596px;width:40px;height:20px;background:#ebebeb"></div>
<div style="left:40px;top:596px;width:31px;height:20px;background:#fdfdca"></div>
<div style="left:71px;top:596px;width:106px;height:20px;background:#fdfdca"></div>
<div style="left:177px;top:596px;width:77px;height:20px;background:#fdfdca"></div>
<div style="left:254px;top:596px;width:172px;height:20px;background:#fdfdca"></div>
<div style="left:0px;top:616px;width:40px;height:20px;background:#ebebeb"></div>
<div style="left:40px;top:616px;width:31px;height:20px;background:#fcfbc3"></div>
<div style="left:71px;top:616px;width:106px;height:20px;background:#fcfbc3"></div>
<div style="left:177px;top:616px;width:77px;height:20px;background:#fcfbc3"></div>
<div style="left:254px;top:616px;width:172px;height:20px;background:#fcfbc3"></div>
<div style="left:0px;top:636px;width:40px;height:20px;background:#ebebeb"></div>
<div style="left:40px;top:636px;width:31px;height:20px;background:#fdfdca"></div>
<div style="left:71px;top:636px;width:106px;height:20px;background:#fdfdca"></div>
<div style="left:177px;top:636px;width:77px;height:20px;background:#fdfdca"></div>
<div style="left:254px;top:636px;width:172px;height:20px;background:#fdfdca"></div>
<div style="left:0px;top:656px;width:40px;height:20px;background:#ebebeb"></div>
<div style="left:40px;top:656px;width:31px;height:20px;background:#fcfbc3"></div>
<div style="left:71px;top:656px;width:106px;height:20px;background:#fcfbc3"></div>
<div style="left:177px;top:656px;width:77px;height:20px;background:#fcfbc3"></div>
<div style="left:254px;top:656px;width:172px;height:20px;background:#fcfbc3"></div>
<div style="left:0px;top:676px;width:40px;height:20px;background:#ebebeb"></div>
<div style="left:40px;top:676px;width:31px;height:20px;background:#fdfdca"></div>
<div style="left:71px;top:676px;width:106px;height:20px;background:#fdfdca"></div>
<div style="left:177px;top:676px;width:77px;height:20px;background:#fdfdca"></div>
<div style="left:254px;top:676px;width:172px;height:20px;background:#fdfdca"></div>
<div style="left:0px;top:696px;width:40px;height:20px;background:#ebebeb"></div>
<div style="left:40px;top:696px;width:31px;height:20px;background:#fcfbc3"></div>
<div style="left:71px;top:696px;width:106px;height:20px;background:#fcfbc3"></div>
<div style="left:177px;top:696px;width:77px;height:20px;background:#fcfbc3"></div>
<div style="left:254px;top:696px;width:172px;height:20px;background:#fcfbc3"></div>
<div style="left:0px;top:716px;width:40px;height:20px;background:#ebebeb"></div>
<div style="left:40px;top:716px;width:31px;height:20px;background:#fdfdca"></div>
<div style="left:71px;top:716px;width:106px;height:20px;background:#fdfdca"></div>
<div style="left:177px;top:716px;width:77px;height:20px;background:#fdfdca"></div>
<div style="left:254px;top:716px;width:172px;height:20px;background:#fdfdca"></div>
<div style="left:0px;top:736px;width:40px;height:13px;background:#ebebeb"></div>
<div style="left:40px;top:736px;width:31px;height:13px;background:#fcfbc3"></div>
<div style="left:71px;top:736px;width:106px;height:13px;background:#fcfbc3"></div>
<div style="left:177px;top:736px;width:77px;height:13px;background:#fcfbc3"></div>
<div style="left:254px;top:736px;width:172px;height:13px;background:#fcfbc3"></div>
<div style="left:3px;top:516px;width:35px;height:1px;background:#c9c9c9"></div>
<div style="left:40px;top:516px;width:31px;height:1px;background:#d3d1a8"></div>
<div style="left:71px;top:516px;width:355px;height:1px;background:#d3d1a8"></div>
<div style="left:3px;top:536px;width:35px;height:1px;background:#c9c9c9"></div>
<div style="left:40px;top:536px;width:31px;height:1px;background:#d3d1a8"></div>
<div style="left:71px;top:536px;width:355px;height:1px;background:#d3d1a8"></div>
<div style="left:3px;top:556px;width:35px;height:1px;background:#c9c9c9"></div>
<div style="left:40px;top:556px;width:31px;height:1px;background:#d3d1a8"></div>
<div style="left:71px;top:556px;width:355px;height:1px;background:#d3d1a8"></div>
<div style="left:3px;top:576px;width:35px;height:1px;background:#c9c9c9"></div>
<div style="left:40px;top:576px;width:31px;height:1px;background:#d3d1a8"></div>
<div style="left:71px;top:576px;width:355px;height:1px;background:#d3d1a8"></div>
<div style="left:3px;top:596px;width:35px;height:1px;background:#c9c9c9"></div>
<div style="left:40px;top:596px;width:31px;height:1px;background:#d3d1a8"></div>
<div style="left:71px;top:596px;width:355px;height:1px;background:#d3d1a8"></div>
<div style="left:3px;top:616px;width:35px;height:1px;background:#c9c9c9"></div>
<div style="left:40px;top:616px;width:31px;height:1px;background:#d3d1a8"></div>
<div style="left:71px;top:616px;width:355px;height:1px;background:#d3d1a8"></div>
<div style="left:3px;top:636px;width:35px;height:1px;background:#c9c9c9"></div>
<div style="left:40px;top:636px;width:31px;height:1px;background:#d3d1a8"></div>
<div style="left:71px;top:636px;width:355px;height:1px;background:#d3d1a8"></div>
<div style="left:3px;top:656px;width:35px;height:1px;background:#c9c9c9"></div>
<div style="left:40px;top:656px;width:31px;height:1px;background:#d3d1a8"></div>
<div style="left:71px;top:656px;width:355px;height:1px;background:#d3d1a8"></div>
<div style="left:3px;top:676px;width:35px;height:1px;background:#c9c9c9"></div>
<div style="left:40px;top:676px;width:31px;height:1px;background:#d3d1a8"></div>
<div style="left:71px;top:676px;width:355px;height:1px;background:#d3d1a8"></div>
<div style="left:3px;top:696px;width:35px;height:1px;background:#c9c9c9"></div>
<div style="left:40px;top:696px;width:31px;height:1px;background:#d3d1a8"></div>
<div style="left:71px;top:696px;width:355px;height:1px;background:#d3d1a8"></div>
<div style="left:3px;top:716px;width:35px;height:1px;background:#c9c9c9"></div>
<div style="left:40px;top:716px;width:31px;height:1px;background:#d3d1a8"></div>
<div style="left:71px;top:716px;width:355px;height:1px;background:#d3d1a8"></div>
<div style="left:3px;top:736px;width:35px;height:1px;background:#c9c9c9"></div>
<div style="left:40px;top:736px;width:31px;height:1px;background:#d3d1a8"></div>
<div style="left:71px;top:736px;width:355px;height:1px;background:#d3d1a8"></div>
<div style="left:40px;top:474px;width:1px;height:20px;background:#b9b9b9"></div>
<div style="left:71px;top:474px;width:1px;height:20px;background:#b9b9b9"></div>
<div style="left:71px;top:496px;width:1px;height:253px;background:#cfcdb2"></div>
<div style="left:177px;top:474px;width:1px;height:20px;background:#b9b9b9"></div>
<div style="left:177px;top:496px;width:1px;height:253px;background:#cfcdb2"></div>
<div style="left:254px;top:474px;width:1px;height:20px;background:#b9b9b9"></div>
<div style="left:254px;top:496px;width:1px;height:253px;background:#cfcdb2"></div>
<div style="left:426px;top:474px;width:1px;height:20px;background:#b9b9b9"></div>
<div style="left:426px;top:496px;width:1px;height:253px;background:#cfcdb2"></div>
<div style="left:0px;top:472px;width:1px;height:277px;background:#9a9a9a"></div>
<div style="left:1279px;top:472px;width:1px;height:277px;background:#a6a6a6"></div>
<div style="left:0px;top:749px;width:1280px;height:1px;background:#a3a3a3"></div>
<svg style="left:14px;top:478px" width="16" height="16" viewBox="0 0 16 16"><path d="M1.6 1.6 H12.5 Q13.2 1.7 12.8 2.4 L8.6 9 V11.6 L5.8 10.4 L1.3 2.4 Q0.9 1.7 1.6 1.6 Z" fill="none" stroke="#353535" stroke-width="1.05" stroke-linejoin="round"/><path d="M10.3 12.1 H14.6 L12.45 14.3 Z" fill="#1a1a1a"/></svg>
<svg style="left:47px;top:477px" width="16" height="16" viewBox="0 0 16 16"><rect x="1" y="1" width="14" height="14" rx="3" fill="#3b8ff0"/><path d="M4.2 8.2 L6.9 11 L11.8 4.8" fill="none" stroke="#fff" stroke-width="1.7"/></svg>
<svg style="left:74px;top:479px" width="14" height="10" viewBox="0 0 14 10"><path d="M1.9 5.4 H5.6" stroke="#111" stroke-width="1.2"/><path d="M5 2.9 L7.4 5.4 L5 7.9Z" fill="#111"/><circle cx="10.5" cy="5.4" r="2.2" fill="#f3e98c" stroke="#b29c2e" stroke-width="1"/></svg>
<span style="left:114.75px;top:477px;font-size:13px;letter-spacing:0.049px;color:#1a1a1a;">actor_id</span>
<span style="left:197.82px;top:477px;font-size:13px;letter-spacing:-0.024px;color:#1a1a1a;">film_id</span>
<span style="left:306.92px;top:477px;font-size:13px;letter-spacing:0.033px;color:#1a1a1a;">last_update</span>
<span style="left:16.74px;top:498px;font-size:12.5px;transform:scaleX(1.1400);transform-origin:0 0;color:#1a1a1a;">1</span>
<svg style="left:48px;top:499px" width="15" height="15" viewBox="0 0 15 15"><rect x="1" y="1" width="13.8" height="13.8" rx="1.5" fill="#7abf4c"/><path d="M4 7.8 L6.6 10.3 L11 5.4" fill="none" stroke="#f0fbe6" stroke-width="1.9"/></svg>
<span style="left:163.67px;top:498px;font-size:12.5px;transform:scaleX(1.1400);transform-origin:0 0;color:#1a1a1a;">5</span>
<span style="left:232.82px;top:498px;font-size:12.5px;transform:scaleX(1.1400);transform-origin:0 0;color:#1a1a1a;">19</span>
<span style="left:259.94px;top:498px;font-size:12.5px;transform:scaleX(1.1540);transform-origin:0 0;color:#1a1a1a;">02/15/2006 05:05:03:000</span>
<span style="left:16.94px;top:518px;font-size:12.5px;transform:scaleX(1.1400);transform-origin:0 0;color:#1a1a1a;">2</span>
<svg style="left:48px;top:519px" width="15" height="15" viewBox="0 0 15 15"><rect x="1" y="1" width="13.8" height="13.8" rx="1.5" fill="#7abf4c"/><path d="M4 7.8 L6.6 10.3 L11 5.4" fill="none" stroke="#f0fbe6" stroke-width="1.9"/></svg>
<span style="left:163.67px;top:518px;font-size:12.5px;transform:scaleX(1.1400);transform-origin:0 0;color:#1a1a1a;">5</span>
<span style="left:232.57px;top:518px;font-size:12.5px;transform:scaleX(1.1400);transform-origin:0 0;color:#1a1a1a;">54</span>
<span style="left:259.94px;top:518px;font-size:12.5px;transform:scaleX(1.1540);transform-origin:0 0;color:#1a1a1a;">02/15/2006 05:05:03:000</span>
<span style="left:16.98px;top:538px;font-size:12.5px;transform:scaleX(1.1400);transform-origin:0 0;color:#1a1a1a;">3</span>
<svg style="left:48px;top:539px" width="15" height="15" viewBox="0 0 15 15"><rect x="1" y="1" width="13.8" height="13.8" rx="1.5" fill="#7abf4c"/><path d="M4 7.8 L6.6 10.3 L11 5.4" fill="none" stroke="#f0fbe6" stroke-width="1.9"/></svg>
<span style="left:163.67px;top:538px;font-size:12.5px;transform:scaleX(1.1400);transform-origin:0 0;color:#1a1a1a;">5</span>
<span style="left:232.75px;top:538px;font-size:12.5px;transform:scaleX(1.1400);transform-origin:0 0;color:#1a1a1a;">85</span>
<span style="left:259.94px;top:538px;font-size:12.5px;transform:scaleX(1.1540);transform-origin:0 0;color:#1a1a1a;">02/15/2006 05:05:03:000</span>
<span style="left:16.98px;top:558px;font-size:12.5px;transform:scaleX(1.1400);transform-origin:0 0;color:#1a1a1a;">4</span>
<svg style="left:48px;top:559px" width="15" height="15" viewBox="0 0 15 15"><rect x="1" y="1" width="13.8" height="13.8" rx="1.5" fill="#7abf4c"/><path d="M4 7.8 L6.6 10.3 L11 5.4" fill="none" stroke="#f0fbe6" stroke-width="1.9"/></svg>
<span style="left:163.67px;top:558px;font-size:12.5px;transform:scaleX(1.1400);transform-origin:0 0;color:#1a1a1a;">5</span>
<span style="left:224.85px;top:558px;font-size:12.5px;transform:scaleX(1.1400);transform-origin:0 0;color:#1a1a1a;">146</span>
<span style="left:259.94px;top:558px;font-size:12.5px;transform:scaleX(1.1540);transform-origin:0 0;color:#1a1a1a;">02/15/2006 05:05:03:000</span>
<span style="left:16.95px;top:578px;font-size:12.5px;transform:scaleX(1.1400);transform-origin:0 0;color:#1a1a1a;">5</span>
<svg style="left:48px;top:579px" width="15" height="15" viewBox="0 0 15 15"><rect x="1" y="1" width="13.8" height="13.8" rx="1.5" fill="#7abf4c"/><path d="M4 7.8 L6.6 10.3 L11 5.4" fill="none" stroke="#f0fbe6" stroke-width="1.9"/></svg>
<span style="left:163.67px;top:578px;font-size:12.5px;transform:scaleX(1.1400);transform-origin:0 0;color:#1a1a1a;">5</span>
<span style="left:224.92px;top:578px;font-size:12.5px;transform:scaleX(1.1400);transform-origin:0 0;color:#1a1a1a;">171</span>
<span style="left:259.94px;top:578px;font-size:12.5px;transform:scaleX(1.1540);transform-origin:0 0;color:#1a1a1a;">02/15/2006 05:05:03:000</span>
<span style="left:16.89px;top:598px;font-size:12.5px;transform:scaleX(1.1400);transform-origin:0 0;color:#1a1a1a;">6</span>
<svg style="left:48px;top:599px" width="15" height="15" viewBox="0 0 15 15"><rect x="1" y="1" width="13.8" height="13.8" rx="1.5" fill="#7abf4c"/><path d="M4 7.8 L6.6 10.3 L11 5.4" fill="none" stroke="#f0fbe6" stroke-width="1.9"/></svg>
<span style="left:163.67px;top:598px;font-size:12.5px;transform:scaleX(1.1400);transform-origin:0 0;color:#1a1a1a;">5</span>
<span style="left:224.94px;top:598px;font-size:12.5px;transform:scaleX(1.1400);transform-origin:0 0;color:#1a1a1a;">172</span>
<span style="left:259.94px;top:598px;font-size:12.5px;transform:scaleX(1.1540);transform-origin:0 0;color:#1a1a1a;">02/15/2006 05:05:03:000</span>
<span style="left:16.93px;top:618px;font-size:12.5px;transform:scaleX(1.1400);transform-origin:0 0;color:#1a1a1a;">7</span>
<svg style="left:48px;top:619px" width="15" height="15" viewBox="0 0 15 15"><rect x="1" y="1" width="13.8" height="13.8" rx="1.5" fill="#7abf4c"/><path d="M4 7.8 L6.6 10.3 L11 5.4" fill="none" stroke="#f0fbe6" stroke-width="1.9"/></svg>
<span style="left:163.67px;top:618px;font-size:12.5px;transform:scaleX(1.1400);transform-origin:0 0;color:#1a1a1a;">5</span>
<span style="left:224.94px;top:618px;font-size:12.5px;transform:scaleX(1.1400);transform-origin:0 0;color:#1a1a1a;">202</span>
<span style="left:259.94px;top:618px;font-size:12.5px;transform:scaleX(1.1540);transform-origin:0 0;color:#1a1a1a;">02/15/2006 05:05:03:000</span>
<span style="left:16.94px;top:638px;font-size:12.5px;transform:scaleX(1.1400);transform-origin:0 0;color:#1a1a1a;">8</span>
<svg style="left:48px;top:639px" width="15" height="15" viewBox="0 0 15 15"><rect x="1" y="1" width="13.8" height="13.8" rx="1.5" fill="#7abf4c"/><path d="M4 7.8 L6.6 10.3 L11 5.4" fill="none" stroke="#f0fbe6" stroke-width="1.9"/></svg>
<span style="left:163.67px;top:638px;font-size:12.5px;transform:scaleX(1.1400);transform-origin:0 0;color:#1a1a1a;">5</span>
<span style="left:224.85px;top:638px;font-size:12.5px;transform:scaleX(1.1400);transform-origin:0 0;color:#1a1a1a;">203</span>
<span style="left:259.94px;top:638px;font-size:12.5px;transform:scaleX(1.1540);transform-origin:0 0;color:#1a1a1a;">02/15/2006 05:05:03:000</span>
<span style="left:16.94px;top:658px;font-size:12.5px;transform:scaleX(1.1400);transform-origin:0 0;color:#1a1a1a;">9</span>
<svg style="left:48px;top:659px" width="15" height="15" viewBox="0 0 15 15"><rect x="1" y="1" width="13.8" height="13.8" rx="1.5" fill="#7abf4c"/><path d="M4 7.8 L6.6 10.3 L11 5.4" fill="none" stroke="#f0fbe6" stroke-width="1.9"/></svg>
<span style="left:163.67px;top:658px;font-size:12.5px;transform:scaleX(1.1400);transform-origin:0 0;color:#1a1a1a;">5</span>
<span style="left:224.85px;top:658px;font-size:12.5px;transform:scaleX(1.1400);transform-origin:0 0;color:#1a1a1a;">286</span>
<span style="left:259.94px;top:658px;font-size:12.5px;transform:scaleX(1.1540);transform-origin:0 0;color:#1a1a1a;">02/15/2006 05:05:03:000</span>
<span style="left:12.71px;top:678px;font-size:12.5px;transform:scaleX(1.1400);transform-origin:0 0;color:#1a1a1a;">10</span>
<svg style="left:48px;top:679px" width="15" height="15" viewBox="0 0 15 15"><rect x="1" y="1" width="13.8" height="13.8" rx="1.5" fill="#7abf4c"/><path d="M4 7.8 L6.6 10.3 L11 5.4" fill="none" stroke="#f0fbe6" stroke-width="1.9"/></svg>
<span style="left:163.67px;top:678px;font-size:12.5px;transform:scaleX(1.1400);transform-origin:0 0;color:#1a1a1a;">5</span>
<span style="left:224.84px;top:678px;font-size:12.5px;transform:scaleX(1.1400);transform-origin:0 0;color:#1a1a1a;">288</span>
<span style="left:259.94px;top:678px;font-size:12.5px;transform:scaleX(1.1540);transform-origin:0 0;color:#1a1a1a;">02/15/2006 05:05:03:000</span>
<span style="left:12.78px;top:698px;font-size:12.5px;transform:scaleX(1.1400);transform-origin:0 0;color:#1a1a1a;">11</span>
<svg style="left:48px;top:699px" width="15" height="15" viewBox="0 0 15 15"><rect x="1" y="1" width="13.8" height="13.8" rx="1.5" fill="#7abf4c"/><path d="M4 7.8 L6.6 10.3 L11 5.4" fill="none" stroke="#f0fbe6" stroke-width="1.9"/></svg>
<span style="left:163.67px;top:698px;font-size:12.5px;transform:scaleX(1.1400);transform-origin:0 0;color:#1a1a1a;">5</span>
<span style="left:224.85px;top:698px;font-size:12.5px;transform:scaleX(1.1400);transform-origin:0 0;color:#1a1a1a;">316</span>
<span style="left:259.94px;top:698px;font-size:12.5px;transform:scaleX(1.1540);transform-origin:0 0;color:#1a1a1a;">02/15/2006 05:05:03:000</span>
<span style="left:12.79px;top:718px;font-size:12.5px;transform:scaleX(1.1400);transform-origin:0 0;color:#1a1a1a;">12</span>
<svg style="left:48px;top:719px" width="15" height="15" viewBox="0 0 15 15"><rect x="1" y="1" width="13.8" height="13.8" rx="1.5" fill="#7abf4c"/><path d="M4 7.8 L6.6 10.3 L11 5.4" fill="none" stroke="#f0fbe6" stroke-width="1.9"/></svg>
<span style="left:163.67px;top:718px;font-size:12.5px;transform:scaleX(1.1400);transform-origin:0 0;color:#1a1a1a;">5</span>
<span style="left:224.78px;top:718px;font-size:12.5px;transform:scaleX(1.1400);transform-origin:0 0;color:#1a1a1a;">340</span>
<span style="left:259.94px;top:718px;font-size:12.5px;transform:scaleX(1.1540);transform-origin:0 0;color:#1a1a1a;">02/15/2006 05:05:03:000</span>
<span style="left:12.75px;top:738px;font-size:12.5px;transform:scaleX(1.1400);transform-origin:0 0;color:#1a1a1a;">13</span>
<svg style="left:48px;top:739px" width="15" height="15" viewBox="0 0 15 15"><rect x="1" y="1" width="13.8" height="13.8" rx="1.5" fill="#7abf4c"/><path d="M4 7.8 L6.6 10.3 L11 5.4" fill="none" stroke="#f0fbe6" stroke-width="1.9"/></svg>
<span style="left:163.67px;top:738px;font-size:12.5px;transform:scaleX(1.1400);transform-origin:0 0;color:#1a1a1a;">5</span>
<span style="left:224.90px;top:738px;font-size:12.5px;transform:scaleX(1.1400);transform-origin:0 0;color:#1a1a1a;">369</span>
<span style="left:259.94px;top:738px;font-size:12.5px;transform:scaleX(1.1540);transform-origin:0 0;color:#1a1a1a;">02/15/2006 05:05:03:000</span>
<div style="left:0px;top:405px;width:1280px;height:26px;background:#ececec"></div>
<div style="left:0px;top:431px;width:1280px;height:1px;background:#a8a8a8"></div>
<svg style="left:43px;top:412px" width="14" height="12" viewBox="0 0 14 12"><rect x="1" y="2.5" width="2" height="7" fill="#333"/><path d="M12.2 0 V12 L5 6 Z" fill="#333"/></svg>
<svg style="left:70px;top:412px" width="10" height="12" viewBox="0 0 10 12"><path d="M8.3 0 V12 L1 6 Z" fill="#333"/></svg>
<div style="left:90px;top:407px;width:125px;height:21px;box-sizing:border-box;background:#fff;border:1px solid #c3c3c3"></div>
<span style="left:92.28px;top:411px;font-size:13px;letter-spacing:0.000px;color:#111;">5</span>
<svg style="left:226px;top:412px" width="10" height="12" viewBox="0 0 10 12"><path d="M1 0 V12 L8 6 Z" fill="#333"/></svg>
<svg style="left:249px;top:412px" width="14" height="12" viewBox="0 0 14 12"><path d="M1 0 V12 L8.2 6 Z" fill="#333"/><rect x="9.5" y="2.5" width="2" height="7" fill="#333"/></svg>
<span style="left:280.42px;top:411px;font-size:13px;letter-spacing:0.456px;color:#1a1a1a;">from 200</span>
<svg style="left:370px;top:412px" width="16" height="16" viewBox="0 0 16 16"><rect x="0" y="0" width="13" height="13" fill="#46525a"/><rect x="1" y="1" width="2" height="2" fill="#86a6bb"/><rect x="4" y="1" width="2" height="2" fill="#86a6bb"/><rect x="7" y="1" width="2" height="2" fill="#86a6bb"/><rect x="10" y="1" width="2" height="2" fill="#86a6bb"/><rect x="1" y="4" width="2" height="2" fill="#ffffff"/><rect x="4" y="4" width="2" height="2" fill="#ffffff"/><rect x="7" y="4" width="2" height="2" fill="#ffffff"/><rect x="10" y="4" width="2" height="2" fill="#ffffff"/><rect x="1" y="7" width="2" height="2" fill="#ffffff"/><rect x="4" y="7" width="2" height="2" fill="#ffffff"/><rect x="7" y="7" width="2" height="2" fill="#ffffff"/><rect x="10" y="7" width="2" height="2" fill="#ffffff"/><rect x="1" y="10" width="2" height="2" fill="#a9a68a"/><rect x="4" y="10" width="2" height="2" fill="#a9a68a"/><rect x="7" y="10" width="2" height="2" fill="#a9a68a"/><rect x="10" y="10" width="2" height="2" fill="#a9a68a"/><circle cx="11.5" cy="11" r="3.9" fill="#62b03a"/><path d="M9.3 11H13.7M11.5 8.8V13.2" stroke="#fff" stroke-width="1.3"/></svg>
<div style="left:395px;top:412px;opacity:1"><svg width="16" height="16" style="position:static"><rect x="0" y="0" width="13" height="13" fill="#46525a"/><rect x="1" y="1" width="2" height="2" fill="#86a6bb"/><rect x="4" y="1" width="2" height="2" fill="#86a6bb"/><rect x="7" y="1" width="2" height="2" fill="#86a6bb"/><rect x="10" y="1" width="2" height="2" fill="#86a6bb"/><rect x="1" y="4" width="2" height="2" fill="#ffffff"/><rect x="4" y="4" width="2" height="2" fill="#ffffff"/><rect x="7" y="4" width="2" height="2" fill="#ffffff"/><rect x="10" y="4" width="2" height="2" fill="#ffffff"/><rect x="1" y="7" width="2" height="2" fill="#8c8f52"/><rect x="4" y="7" width="2" height="2" fill="#8c8f52"/><rect x="7" y="7" width="2" height="2" fill="#8c8f52"/><rect x="10" y="7" width="2" height="2" fill="#8c8f52"/><rect x="1" y="10" width="2" height="2" fill="#8c8f52"/><rect x="4" y="10" width="2" height="2" fill="#8c8f52"/><rect x="7" y="10" width="2" height="2" fill="#8c8f52"/><rect x="10" y="10" width="2" height="2" fill="#8c8f52"/><circle cx="11.5" cy="11" r="3.9" fill="#62b03a"/><path d="M9.3 11H13.7M11.5 8.8V13.2" stroke="#fff" stroke-width="1.3"/></svg></div>
<svg style="left:420px;top:412px" width="16" height="16" viewBox="0 0 16 16"><rect x="0" y="0" width="13" height="13" fill="#46525a"/><rect x="1" y="1" width="2" height="2" fill="#86a6bb"/><rect x="4" y="1" width="2" height="2" fill="#86a6bb"/><rect x="7" y="1" width="2" height="2" fill="#86a6bb"/><rect x="10" y="1" width="2" height="2" fill="#86a6bb"/><rect x="1" y="4" width="2" height="2" fill="#ffffff"/><rect x="4" y="4" width="2" height="2" fill="#ffffff"/><rect x="7" y="4" width="2" height="2" fill="#ffffff"/><rect x="10" y="4" width="2" height="2" fill="#ffffff"/><rect x="1" y="7" width="2" height="2" fill="#c9a57a"/><rect x="4" y="7" width="2" height="2" fill="#c9a57a"/><rect x="7" y="7" width="2" height="2" fill="#c9a57a"/><rect x="10" y="7" width="2" height="2" fill="#c9a57a"/><rect x="1" y="10" width="2" height="2" fill="#ffffff"/><rect x="4" y="10" width="2" height="2" fill="#ffffff"/><rect x="7" y="10" width="2" height="2" fill="#ffffff"/><rect x="10" y="10" width="2" height="2" fill="#ffffff"/><circle cx="11.5" cy="11" r="3.9" fill="#bf3a2e"/><path d="M9.4 11H13.6" stroke="#fff" stroke-width="1.4"/></svg>
<svg style="left:455px;top:413px" width="14" height="11" viewBox="0 0 14 11"><path d="M1.5 5.5 L5 9 L12.5 1.5" fill="none" stroke="#93c193" stroke-width="1.7"/></svg>
<svg style="left:481px;top:412px" width="13" height="13" viewBox="0 0 13 13"><path d="M1.5 1.5 L11.5 11.5 M11.5 1.5 L1.5 11.5" stroke="#e6a9a9" stroke-width="1.6"/></svg>
<svg style="left:515px;top:411px" width="15" height="15" viewBox="0 0 15 15"><path d="M2 13 L3 9.5 L10.5 2 L13 4.5 L5.5 12 Z" fill="#333" /><path d="M11.3 1.3 L12 0.6 L14.4 3 L13.7 3.7Z" fill="#333"/></svg>
<svg style="left:538px;top:412px" width="17" height="12" viewBox="0 0 17 12"><rect x="1" y="1" width="15" height="10" fill="none" stroke="#7a7a7a" stroke-width="1.6"/><path d="M5 2V10M8.5 2V10M12 2V10" stroke="#7a7a7a" stroke-width="1.3"/></svg>
<svg style="left:1252px;top:411px" width="18" height="16" viewBox="0 0 18 16"><rect x="7.1" y="1" width="1.1" height="12" fill="#222"/><path d="M3 6.5 H6.2 M9.2 6.5 H12.5" stroke="#5b8db8" stroke-width="1.6"/><path d="M1.8 6.5 L4 4.6 V8.4Z M13.7 6.5 L11.5 4.6 V8.4Z" fill="#5b8db8"/><path d="M9 11 H15.5 L12.25 14.5 Z" fill="#111"/></svg>
<div style="left:0px;top:750px;width:1280px;height:26px;background:#ececec"></div>
<div style="left:0px;top:776px;width:1280px;height:1px;background:#808080"></div>
<svg style="left:43px;top:757px" width="14" height="12" viewBox="0 0 14 12"><rect x="1" y="2.5" width="2" height="7" fill="#333"/><path d="M12.2 0 V12 L5 6 Z" fill="#333"/></svg>
<svg style="left:70px;top:757px" width="10" height="12" viewBox="0 0 10 12"><path d="M8.3 0 V12 L1 6 Z" fill="#333"/></svg>
<div style="left:90px;top:752px;width:125px;height:21px;box-sizing:border-box;background:#fff;border:1px solid #c3c3c3"></div>
<span style="left:91.81px;top:756px;font-size:13px;letter-spacing:0.000px;color:#111;">1</span>
<svg style="left:226px;top:757px" width="10" height="12" viewBox="0 0 10 12"><path d="M1 0 V12 L8 6 Z" fill="#333"/></svg>
<svg style="left:249px;top:757px" width="14" height="12" viewBox="0 0 14 12"><path d="M1 0 V12 L8.2 6 Z" fill="#333"/><rect x="9.5" y="2.5" width="2" height="7" fill="#333"/></svg>
<span style="left:280.42px;top:756px;font-size:13px;letter-spacing:0.455px;color:#1a1a1a;">from 29</span>
<svg style="left:370px;top:757px" width="16" height="16" viewBox="0 0 16 16"><rect x="0" y="0" width="13" height="13" fill="#46525a"/><rect x="1" y="1" width="2" height="2" fill="#86a6bb"/><rect x="4" y="1" width="2" height="2" fill="#86a6bb"/><rect x="7" y="1" width="2" height="2" fill="#86a6bb"/><rect x="10" y="1" width="2" height="2" fill="#86a6bb"/><rect x="1" y="4" width="2" height="2" fill="#ffffff"/><rect x="4" y="4" width="2" height="2" fill="#ffffff"/><rect x="7" y="4" width="2" height="2" fill="#ffffff"/><rect x="10" y="4" width="2" height="2" fill="#ffffff"/><rect x="1" y="7" width="2" height="2" fill="#ffffff"/><rect x="4" y="7" width="2" height="2" fill="#ffffff"/><rect x="7" y="7" width="2" height="2" fill="#ffffff"/><rect x="10" y="7" width="2" height="2" fill="#ffffff"/><rect x="1" y="10" width="2" height="2" fill="#a9a68a"/><rect x="4" y="10" width="2" height="2" fill="#a9a68a"/><rect x="7" y="10" width="2" height="2" fill="#a9a68a"/><rect x="10" y="10" width="2" height="2" fill="#a9a68a"/><circle cx="11.5" cy="11" r="3.9" fill="#62b03a"/><path d="M9.3 11H13.7M11.5 8.8V13.2" stroke="#fff" stroke-width="1.3"/></svg>
<div style="left:395px;top:757px;opacity:0.45"><svg width="16" height="16" style="position:static"><rect x="0" y="0" width="13" height="13" fill="#46525a"/><rect x="1" y="1" width="2" height="2" fill="#86a6bb"/><rect x="4" y="1" width="2" height="2" fill="#86a6bb"/><rect x="7" y="1" width="2" height="2" fill="#86a6bb"/><rect x="10" y="1" width="2" height="2" fill="#86a6bb"/><rect x="1" y="4" width="2" height="2" fill="#ffffff"/><rect x="4" y="4" width="2" height="2" fill="#ffffff"/><rect x="7" y="4" width="2" height="2" fill="#ffffff"/><rect x="10" y="4" width="2" height="2" fill="#ffffff"/><rect x="1" y="7" width="2" height="2" fill="#8c8f52"/><rect x="4" y="7" width="2" height="2" fill="#8c8f52"/><rect x="7" y="7" width="2" height="2" fill="#8c8f52"/><rect x="10" y="7" width="2" height="2" fill="#8c8f52"/><rect x="1" y="10" width="2" height="2" fill="#8c8f52"/><rect x="4" y="10" width="2" height="2" fill="#8c8f52"/><rect x="7" y="10" width="2" height="2" fill="#8c8f52"/><rect x="10" y="10" width="2" height="2" fill="#8c8f52"/><circle cx="11.5" cy="11" r="3.9" fill="#62b03a"/><path d="M9.3 11H13.7M11.5 8.8V13.2" stroke="#fff" stroke-width="1.3"/></svg></div>
<svg style="left:420px;top:757px" width="16" height="16" viewBox="0 0 16 16"><rect x="0" y="0" width="13" height="13" fill="#46525a"/><rect x="1" y="1" width="2" height="2" fill="#86a6bb"/><rect x="4" y="1" width="2" height="2" fill="#86a6bb"/><rect x="7" y="1" width="2" height="2" fill="#86a6bb"/><rect x="10" y="1" width="2" height="2" fill="#86a6bb"/><rect x="1" y="4" width="2" height="2" fill="#ffffff"/><rect x="4" y="4" width="2" height="2" fill="#ffffff"/><rect x="7" y="4" width="2" height="2" fill="#ffffff"/><rect x="10" y="4" width="2" height="2" fill="#ffffff"/><rect x="1" y="7" width="2" height="2" fill="#c9a57a"/><rect x="4" y="7" width="2" height="2" fill="#c9a57a"/><rect x="7" y="7" width="2" height="2" fill="#c9a57a"/><rect x="10" y="7" width="2" height="2" fill="#c9a57a"/><rect x="1" y="10" width="2" height="2" fill="#ffffff"/><rect x="4" y="10" width="2" height="2" fill="#ffffff"/><rect x="7" y="10" width="2" height="2" fill="#ffffff"/><rect x="10" y="10" width="2" height="2" fill="#ffffff"/><circle cx="11.5" cy="11" r="3.9" fill="#bf3a2e"/><path d="M9.4 11H13.6" stroke="#fff" stroke-width="1.4"/></svg>
<svg style="left:455px;top:758px" width="14" height="11" viewBox="0 0 14 11"><path d="M1.5 5.5 L5 9 L12.5 1.5" fill="none" stroke="#93c193" stroke-width="1.7"/></svg>
<svg style="left:481px;top:757px" width="13" height="13" viewBox="0 0 13 13"><path d="M1.5 1.5 L11.5 11.5 M11.5 1.5 L1.5 11.5" stroke="#e6a9a9" stroke-width="1.6"/></svg>
<svg style="left:515px;top:756px" width="15" height="15" viewBox="0 0 15 15"><path d="M2 13 L3 9.5 L10.5 2 L13 4.5 L5.5 12 Z" fill="#8a8a8a" /><path d="M11.3 1.3 L12 0.6 L14.4 3 L13.7 3.7Z" fill="#8a8a8a"/></svg>
<svg style="left:538px;top:757px" width="17" height="12" viewBox="0 0 17 12"><rect x="1" y="1" width="15" height="10" fill="none" stroke="#7a7a7a" stroke-width="1.6"/><path d="M5 2V10M8.5 2V10M12 2V10" stroke="#7a7a7a" stroke-width="1.3"/></svg>
<svg style="left:1252px;top:756px" width="18" height="16" viewBox="0 0 18 16"><rect x="7.1" y="1" width="1.1" height="12" fill="#222"/><path d="M3 6.5 H6.2 M9.2 6.5 H12.5" stroke="#5b8db8" stroke-width="1.6"/><path d="M1.8 6.5 L4 4.6 V8.4Z M13.7 6.5 L11.5 4.6 V8.4Z" fill="#5b8db8"/><path d="M9 11 H15.5 L12.25 14.5 Z" fill="#111"/></svg>
<div style="left:0px;top:432px;width:1280px;height:40px;background:#ececec"></div>
<div style="left:0px;top:472px;width:1280px;height:1px;background:#8f8f8f"></div>
<span style="left:15.83px;top:444px;font-size:13px;letter-spacing:-0.131px;color:#1a1a1a;">Related Table:</span>
<div style="left:106.5px;top:441.3px;width:264.1px;height:20.19999999999999px;box-sizing:border-box;border-radius:4px;background:#fff;border:0.5px solid #b5b5b5;box-shadow:0 0.5px 1px rgba(0,0,0,0.18)"></div>
<div style="left:354.4px;top:441.3px;width:16.200000000000045px;height:20.19999999999999px;border-radius:0 4px 4px 0;background:linear-gradient(#64a8f8,#2c7ef0)"></div>
<svg style="left:357.5px;top:444.4px" width="10" height="14" viewBox="0 0 10 14"><path d="M1.6 5.2 L5 2 L8.4 5.2 M1.6 8.8 L5 12 L8.4 8.8" fill="none" stroke="#fff" stroke-width="1.5"/></svg>
<svg style="left:117px;top:445px" width="14" height="14" viewBox="0 0 14 14"><rect x="0.5" y="0.5" width="12" height="12" fill="#fff" stroke="#3c474b" stroke-width="1.1"/><rect x="1" y="1" width="11" height="2.6" fill="#86a0ab"/><path d="M1 3.8H12" stroke="#3c474b" stroke-width="1"/><path d="M3.8 1V12M6.6 1V12M9.3 1V12" stroke="#3c474b" stroke-width="0.8"/><path d="M1 6.6H12M1 9.3H12" stroke="#8d9598" stroke-width="0.7"/></svg>
<span style="left:134.82px;top:444px;font-size:13px;letter-spacing:0.001px;color:#1a1a1a;">film_actor : fk_film_actor_actor (1:M)</span>
<span style="left:388.68px;top:444px;font-size:13px;letter-spacing:0.343px;color:#1a1a1a;">Mode:</span>
<div style="left:433.7px;top:441.3px;width:102.05000000000001px;height:20.19999999999999px;box-sizing:border-box;border-radius:4px;background:#fff;border:0.5px solid #b5b5b5;box-shadow:0 0.5px 1px rgba(0,0,0,0.18)"></div>
<div style="left:519px;top:441.3px;width:16.75px;height:20.19999999999999px;border-radius:0 4px 4px 0;background:linear-gradient(#64a8f8,#2c7ef0)"></div>
<svg style="left:522.375px;top:444.4px" width="10" height="14" viewBox="0 0 10 14"><path d="M1.6 5.2 L5 2 L8.4 5.2 M1.6 8.8 L5 12 L8.4 8.8" fill="none" stroke="#fff" stroke-width="1.5"/></svg>
<span style="left:442.04px;top:444px;font-size:13px;letter-spacing:0.117px;color:#1a1a1a;">show linked</span>
<span style="left:553.81px;top:444px;font-size:13px;letter-spacing:0.318px;color:#1a1a1a;">Set:</span>
<div style="left:585.3px;top:441.3px;width:141.4000000000001px;height:20.19999999999999px;box-sizing:border-box;border-radius:4px;background:#fff;border:0.5px solid #b5b5b5;box-shadow:0 0.5px 1px rgba(0,0,0,0.18)"></div>
<div style="left:710.3px;top:441.3px;width:16.40000000000009px;height:20.19999999999999px;border-radius:0 4px 4px 0;background:linear-gradient(#64a8f8,#2c7ef0)"></div>
<svg style="left:713.5px;top:444.4px" width="10" height="14" viewBox="0 0 10 14"><path d="M1.6 5.2 L5 2 L8.4 5.2 M1.6 8.8 L5 12 L8.4 8.8" fill="none" stroke="#fff" stroke-width="1.5"/></svg>
<span style="left:593.78px;top:444px;font-size:13px;letter-spacing:-0.062px;color:#1a1a1a;">OR (union)</span>
<svg style="left:1149px;top:443px" width="16" height="16" viewBox="0 0 16 16"><rect x="1" y="1" width="14" height="14" rx="3" fill="#3b8ff0"/><path d="M4.2 8.2 L6.9 11 L11.8 4.8" fill="none" stroke="#fff" stroke-width="1.7"/></svg>
<span style="left:1168.97px;top:444px;font-size:13px;letter-spacing:-0.157px;color:#1a1a1a;">Auto</span>
<div style="left:1207.8px;top:441.6px;width:65.5px;height:19.7px;box-sizing:border-box;border-radius:4px;background:#f4f4f4;border:0.5px solid #cfcfcf;box-shadow:0 0.5px 0.5px rgba(0,0,0,0.08)"></div>
<span style="left:1222.01px;top:444px;font-size:13px;letter-spacing:0.191px;color:#8a8a8a;">Select</span>
<div style="left:0px;top:777px;width:1280px;height:23px;background:linear-gradient(#e7e7e7,#bababa)"></div>
<span style="left:5.72px;top:781px;font-size:13px;letter-spacing:0.208px;color:#1a1a1a;">localhost</span>
</body></html>
